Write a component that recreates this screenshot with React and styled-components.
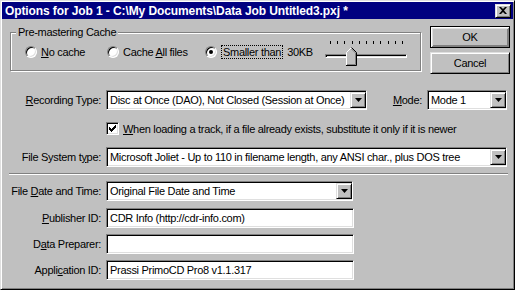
import React from 'react'
import styled, { createGlobalStyle, css } from 'styled-components'

const GlobalStyle = createGlobalStyle`
  html, body {
    margin: 0;
    padding: 0;
    background: #c0c0c0;
  }
  body {
    font-family: "Liberation Sans", Arial, sans-serif;
    font-size: 11px;
    letter-spacing: -0.3px;
    color: #000;
  }
`

// win95 bevels
const sunken = css`
  border: 1px solid;
  border-color: #808080 #fff #fff #808080;
  box-shadow: inset 1px 1px 0 #000, inset -1px -1px 0 #dfdfdf;
`
const raised = css`
  border: 1px solid;
  border-color: #dfdfdf #000 #000 #dfdfdf;
  box-shadow: inset 1px 1px 0 #fff, inset -1px -1px 0 #808080;
`

const Window = styled.div`
  width: 515px;
  height: 290px;
  box-sizing: border-box;
  border: 1px solid;
  border-color: #dfdfdf #000 #000 #dfdfdf;
  box-shadow: inset 1px 1px 0 #fff, inset -1px -1px 0 #808080;
  padding: 1px;
  background: #c0c0c0;
  display: flex;
  flex-direction: column;
`

const TitleBar = styled.div`
  height: 17px;
  background: #000080;
  color: #fff;
  font-weight: bold;
  font-size: 12px;
  letter-spacing: -0.1px;
  display: flex;
  align-items: center;
  padding-left: 3px;
  padding-right: 2px;
  white-space: nowrap;

  span {
    flex: 1;
  }
`

const CloseBtn = styled.div`
  ${raised};
  box-sizing: border-box;
  width: 16px;
  height: 14px;
  background: #c0c0c0;
  display: flex;
  align-items: center;
  justify-content: center;
`

const Body = styled.div`
  display: flex;
  flex-direction: column;
  padding-left: 8px;
`

const TopRow = styled.div`
  display: flex;
  align-items: flex-start;
  margin-top: 7px;
`

const GroupBox = styled.div`
  position: relative;
  box-sizing: border-box;
  width: 411px;
  height: 39px;
  margin-top: 6px;
  border: 1px solid #808080;
  box-shadow: 1px 1px 0 #fff, inset 1px 1px 0 #fff;
  padding: 9px 0 0 14px;
`

const Legend = styled.div`
  position: absolute;
  top: -8px;
  left: 5px;
  padding: 0 2px;
  background: #c0c0c0;
  line-height: 14px;
`

const RadioRow = styled.div`
  display: flex;
  align-items: center;
  height: 20px;
`

const RadioOption = styled.label`
  display: flex;
  align-items: center;
  gap: 4px;
  width: ${({w}) => w ? w + 'px' : 'auto'};
`

const RadioDot = styled.span`
  box-sizing: border-box;
  width: 12px;
  height: 12px;
  border-radius: 50%;
  background: #fff;
  border: 1px solid;
  border-color: #808080 #fff #fff #808080;
  box-shadow: inset 1px 1px 0 #000, inset -1px -1px 0 #dfdfdf;
  display: flex;
  align-items: center;
  justify-content: center;

  &::after {
    content: '';
    width: 4px;
    height: 4px;
    border-radius: 50%;
    background: ${({on}) => on ? '#000' : 'transparent'};
  }
`

const Focus = styled.span`
  outline: 1px dotted #000;
  padding: 0 1px;
  margin-left: 1px;
`

const SizeText = styled.span`
  margin-left: 5px;
`

const Slider = styled.div`
  position: relative;
  width: 82px;
  height: 25px;
  margin-left: auto;
  margin-right: 13px;
  align-self: flex-start;
  margin-top: -1px;
`

const Ticks = styled.div`
  display: flex;
  justify-content: space-between;
  margin: 0 4px 0 5px;

  i {
    width: 1px;
    height: 3px;
    background: #000;
  }
`

const Track = styled.div`
  box-sizing: border-box;
  height: 4px;
  margin-top: 10px;
  ${sunken};
`

const Thumb = styled.svg`
  position: absolute;
  left: 21px;
  top: 6px;
`

const Buttons = styled.div`
  display: flex;
  flex-direction: column;
  gap: 4px;
  margin-left: 9px;
`

const Button = styled.div`
  box-sizing: border-box;
  width: 80px;
  height: 22px;
  display: flex;
  align-items: center;
  justify-content: center;
  ${raised};
  ${({def}) => def && css`
    border: 1px solid #000;
    box-shadow: inset 1px 1px 0 #fff, inset -1px -1px 0 #808080, inset 2px 2px 0 #dfdfdf, inset -2px -2px 0 #808080;
  `}
`

const Row = styled.div`
  display: flex;
  align-items: center;
  height: ${({h}) => h || 20}px;
  margin-top: ${({mt}) => mt}px;
  margin-left: -8px;
`

const Label = styled.div`
  width: ${({w}) => w || 99}px;
  text-align: right;
  margin-right: 5px;
  white-space: nowrap;

  u {
    text-decoration: underline;
    text-underline-offset: 1px;
  }
`

const Field = styled.div`
  box-sizing: border-box;
  width: ${({w}) => w}px;
  height: 20px;
  background: #fff;
  ${sunken};
  padding: 2px 2px 2px 3px;
  display: flex;
  align-items: center;
  white-space: nowrap;
  overflow: hidden;

  span {
    flex: 1;
    overflow: hidden;
  }
`

const ArrowBtn = styled.div`
  box-sizing: border-box;
  flex: none;
  width: 16px;
  height: 16px;
  margin-right: -2px;
  background: #c0c0c0;
  ${raised};
  display: flex;
  align-items: center;
  justify-content: center;
`

const Check = styled.div`
  box-sizing: border-box;
  width: 13px;
  height: 13px;
  margin-left: 104px;
  margin-right: 4px;
  background: #fff;
  ${sunken};
  display: flex;
  align-items: center;
  justify-content: center;
`

const Separator = styled.div`
  height: 1px;
  width: 499px;
  margin: 6px 0 0 -1px;
  background: #808080;
  border-bottom: 1px solid #fff;
`

const Dropdown = ({w, children}) => (
  <Field w={w}>
    <span>{children}</span>
    <ArrowBtn>
      <svg width="7" height="4" viewBox="0 0 7 4"><path d="M0 0h7L3.5 4z" fill="#000" /></svg>
    </ArrowBtn>
  </Field>
)

const App = () => {
  return (
    <>
      <GlobalStyle />
      <Window>
        <TitleBar>
          <span>{'Options for Job 1 - C:\\My Documents\\Data Job Untitled3.pxj *'}</span>
          <CloseBtn>
            <svg width="8" height="7" viewBox="0 0 8 7">
              <path d="M0 0h2l2 2 2-2h2L5 3.5 8 7H6L4 5 2 7H0l3-3.5z" fill="#000" />
            </svg>
          </CloseBtn>
        </TitleBar>

        <Body>
          <TopRow>
            <GroupBox>
              <Legend>Pre-mastering Cache</Legend>
              <RadioRow>
                <RadioOption w={82}>
                  <RadioDot /> <span><u>N</u>o cache</span>
                </RadioOption>
                <RadioOption w={98}>
                  <RadioDot /> <span>Cache <u>A</u>ll files</span>
                </RadioOption>
                <RadioOption>
                  <RadioDot on /> <Focus>Smaller than</Focus>
                </RadioOption>
                <SizeText>30KB</SizeText>
                <Slider>
                  <Ticks>
                    {Array.from({length: 11}).map((_, i) => <i key={i} />)}
                  </Ticks>
                  <Track />
                  <Thumb width="11" height="19" viewBox="0 0 11 19">
                    <path d="M0.5 18.5V5.5L5.5 0.5L10.5 5.5V18.5Z" fill="#c0c0c0" />
                    <path d="M0.5 18V5.5L5.5 0.5" fill="none" stroke="#fff" />
                    <path d="M5.5 0.5L10.5 5.5V18.5H0" fill="none" stroke="#000" />
                    <path d="M5.5 2L9.5 6V17.5H1" fill="none" stroke="#808080" />
                  </Thumb>
                </Slider>
              </RadioRow>
            </GroupBox>
            <Buttons>
              <Button def>OK</Button>
              <Button>Cancel</Button>
            </Buttons>
          </TopRow>

          <Row mt={16}>
            <Label><u>R</u>ecording Type:</Label>
            <Dropdown w={261}>Disc at Once (DAO), Not Closed (Session at Once)</Dropdown>
            <Label w={55}><u>M</u>ode:</Label>
            <Dropdown w={80}>Mode 1</Dropdown>
          </Row>

          <Row mt={12} h={13}>
            <Check>
              <svg width="7" height="7" viewBox="0 0 7 7">
                <path d="M0 2h1v1h1v1h1v-1h1v-1h1v-1h1v-1h1v3h-1v1h-1v1h-1v1h-1v1h-1v-1h-1v-1h-1z" fill="#000" />
              </svg>
            </Check>
            <span><u>W</u>hen loading a track, if a file already exists, substitute it only if it is newer</span>
          </Row>

          <Row mt={12}>
            <Label>File System t<u>y</u>pe:</Label>
            <Dropdown w={401}>Microsoft Joliet -  Up to 110 in filename length, any ANSI char., plus DOS tree</Dropdown>
          </Row>

          <Separator />

          <Row mt={6}>
            <Label>File <u>D</u>ate and Time:</Label>
            <Dropdown w={247}>Original File Date and Time</Dropdown>
          </Row>

          <Row mt={7}>
            <Label><u>P</u>ublisher ID:</Label>
            <Field w={248}><span>CDR Info (http://cdr-info.com)</span></Field>
          </Row>

          <Row mt={6}>
            <Label>D<u>a</u>ta Preparer:</Label>
            <Field w={248}><span></span></Field>
          </Row>

          <Row mt={6}>
            <Label>Appli<u>c</u>ation ID:</Label>
            <Field w={248}><span>Prassi PrimoCD Pro8 v1.1.317</span></Field>
          </Row>
        </Body>
      </Window>
    </>
  )
}

export default App
